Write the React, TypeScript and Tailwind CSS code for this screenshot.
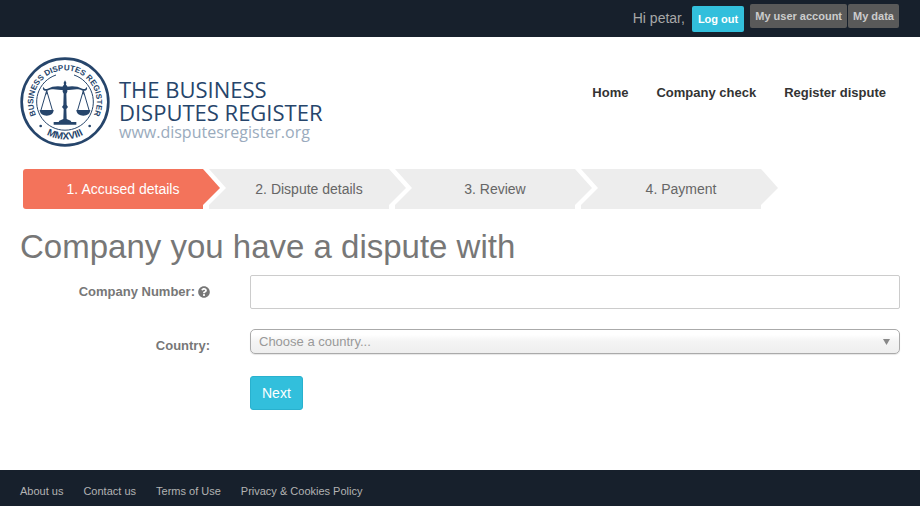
import type { ReactNode } from 'react'
import { FaQuestionCircle } from 'react-icons/fa'

const steps = [
  { id: 1, label: 'Accused details' },
  { id: 2, label: 'Dispute details' },
  { id: 3, label: 'Review' },
  { id: 4, label: 'Payment' },
]

const mainLinks = ['Home', 'Company check', 'Register dispute']

const footerLinks = ['About us', 'Contact us', 'Terms of Use', 'Privacy & Cookies Policy']

function Seal() {
  return (
    <svg viewBox="0 0 270 270" className="h-[90px] w-[90px] shrink-0" fill="none" aria-hidden="true">
      <defs>
        <path id="seal-top" d="M62.2 196 A95 95 0 1 1 207.8 196" />
        <path id="seal-bottom" d="M45 202 A112 112 0 0 0 225 202" />
      </defs>
      <circle cx="135" cy="135" r="130" stroke="#26456b" strokeWidth="8" />
      <path d="M108 54 A85 85 0 1 0 162 54" stroke="#26456b" strokeWidth="3" />
      <g fill="#26456b" fontFamily="Liberation Sans, sans-serif" fontWeight="700">
        <text fontSize="24" textAnchor="middle">
          <textPath href="#seal-top" startOffset="50%">
            BUSINESS DISPUTES REGISTER
          </textPath>
        </text>
        <text fontSize="30" textAnchor="middle">
          <textPath href="#seal-bottom" startOffset="50%">
            MMXVIII
          </textPath>
        </text>
        <circle cx="62" cy="207" r="4" />
        <circle cx="209" cy="207" r="4" />
        {/* pillar and base */}
        <path d="M135 70 L139 77 L138 83 L142 88 V104 L139 110 L140 144 L144 150 L139 156 L140 186 L152 191 L154 195 H169 V203 H101 V195 H116 L118 191 L130 186 L131 156 L126 150 L130 144 L131 110 L128 104 V88 L132 83 L131 77 Z" />
        {/* beam */}
        <path d="M131 89 C113 86 97 87 83 95 C76 98 72 95 71 90 C65 95 71 104 82 101 C97 92 114 99 131 99 Z" />
        <path d="M139 89 C157 86 173 87 187 95 C194 98 198 95 199 90 C205 95 199 104 188 101 C173 92 156 99 139 99 Z" />
        {/* pans */}
        <path d="M59 159 h42 c-1 11 -9 17 -21 17 s-20 -6 -21 -17 z" />
        <path d="M169 159 h42 c-1 11 -9 17 -21 17 s-20 -6 -21 -17 z" />
      </g>
      <path
        d="M80 101 L63 159 M80 101 L97 159 M80 101 V112 M190 101 L173 159 M190 101 L207 159 M190 101 V112"
        stroke="#26456b"
        strokeWidth="3"
      />
    </svg>
  )
}

function Logo() {
  return (
    <a href="#" className="flex items-center gap-[9px] font-['Open_Sans',sans-serif]">
      <Seal />
      <span className="block pt-[14px] text-[#26456b]">
        <span className="block text-[22px] leading-[23px]">THE BUSINESS</span>
        <span className="block text-[22px] leading-[23px]">DISPUTES REGISTER</span>
        <span className="block text-[16px] leading-4 text-[#9aabbd]">www.disputesregister.org</span>
      </span>
    </a>
  )
}

function TopBar() {
  return (
    <div className="flex h-[37px] items-start justify-end bg-[#17202c] pr-[21px] pl-5">
      <span className="mr-[7px] pt-2 text-[14px] leading-5 text-[#a8a8a8]">Hi petar,</span>
      <button
        type="button"
        className="mt-[6px] mr-[6px] h-[26px] rounded-xs bg-[#32bfdc] px-[6px] text-[11px] font-bold text-white"
      >
        Log out
      </button>
      <div className="mt-1 flex gap-px">
        {['My user account', 'My data'].map((label) => (
          <button
            key={label}
            type="button"
            className="h-6 rounded-xs bg-[#595959] px-[5px] text-[11px] font-bold text-[#cccccc]"
          >
            {label}
          </button>
        ))}
      </div>
    </div>
  )
}

function StepBar({ current }: { current: number }) {
  return (
    <ol className="flex gap-[6px] px-[23px] text-[14px]">
      {steps.map((step, i) => {
        const active = step.id === current
        return (
          <li
            key={step.id}
            style={{ zIndex: steps.length - i }}
            className={`relative flex h-10 w-[180px] items-center justify-center pl-5 ${
              active ? 'rounded-l-[3px] bg-[#f3735b] text-white' : 'bg-[#ededed] text-[#666666]'
            }`}
          >
            {step.id}. {step.label}
            <span className="absolute top-0 left-full ml-[6px] h-9 w-[17px] bg-white [clip-path:polygon(0_0,100%_53%,0_100%)]" />
            <span className="absolute top-0 left-full h-9 w-[6px] bg-white" />
            <span
              className={`absolute top-0 left-full h-9 w-[17px] [clip-path:polygon(0_0,100%_53%,0_100%)] ${
                active ? 'bg-[#f3735b]' : 'bg-[#ededed]'
              }`}
            />
          </li>
        )
      })}
    </ol>
  )
}

function FormRow({ id, label, children }: { id: string; label: ReactNode; children: ReactNode }) {
  return (
    <div className="grid grid-cols-4">
      <label
        htmlFor={id}
        className="flex items-center justify-end gap-[3px] self-start px-5 pt-2 text-[13px] leading-[18px] font-bold text-[#777777]"
      >
        {label}
      </label>
      <div className="col-span-3 px-5">{children}</div>
    </div>
  )
}

export default function App() {
  return (
    <div className="flex min-h-screen flex-col bg-white font-['Liberation_Sans',Arial,sans-serif]">
      <TopBar />

      <header className="flex items-start justify-between px-5 pt-5">
        <Logo />
        <nav className="flex gap-7 pt-[27px] pr-[14px] text-[13px] leading-[18px] font-bold text-[#333333]">
          {mainLinks.map((link) => (
            <a key={link} href="#">
              {link}
            </a>
          ))}
        </nav>
      </header>

      <main className="flex-1 pt-[22px]">
        <StepBar current={1} />

        <h1 className="mt-[17px] px-5 text-[33px] leading-[42px] text-[#777777]">
          Company you have a dispute with
        </h1>

        <form className="mt-[7px] space-y-5">
          <FormRow
            id="company-number"
            label={
              <>
                Company Number: <FaQuestionCircle className="h-3 w-3" />
              </>
            }
          >
            <input
              id="company-number"
              type="text"
              className="block h-[34px] w-full rounded-xs border border-[#cccccc] px-3 text-[14px] text-[#555555]"
            />
          </FormRow>

          <FormRow id="country" label="Country:">
            <div className="relative">
              <select
                id="country"
                defaultValue=""
                className="block h-[25px] w-full appearance-none rounded-[5px] border border-[#aaaaaa] bg-linear-to-b from-white from-20% via-[#f4f4f4] via-50% to-[#eeeeee] px-2 text-[13px] text-[#999999] shadow-[0_1px_1px_rgba(0,0,0,0.1)]"
              >
                <option value="">Choose a country...</option>
              </select>
              <svg
                viewBox="0 0 7 6"
                className="pointer-events-none absolute top-[10px] right-[10px] h-[6px] w-[7px]"
                aria-hidden="true"
              >
                <path d="M0 0 H7 L3.5 6 Z" fill="#888888" />
              </svg>
            </div>
          </FormRow>

          <div className="grid grid-cols-4 pt-px">
            <div className="col-span-3 col-start-2 px-5">
              <button
                type="submit"
                className="h-[34px] rounded-[3px] border border-[#29b1ce] bg-[#32bfdc] px-[11px] text-[14px] text-white"
              >
                Next
              </button>
            </div>
          </div>
        </form>
      </main>

      <footer className="flex h-9 items-center gap-5 bg-[#17202c] px-5 pt-[6px] text-[11px] text-[#b3b3b3]">
        {footerLinks.map((link) => (
          <a key={link} href="#">
            {link}
          </a>
        ))}
      </footer>
    </div>
  )
}
